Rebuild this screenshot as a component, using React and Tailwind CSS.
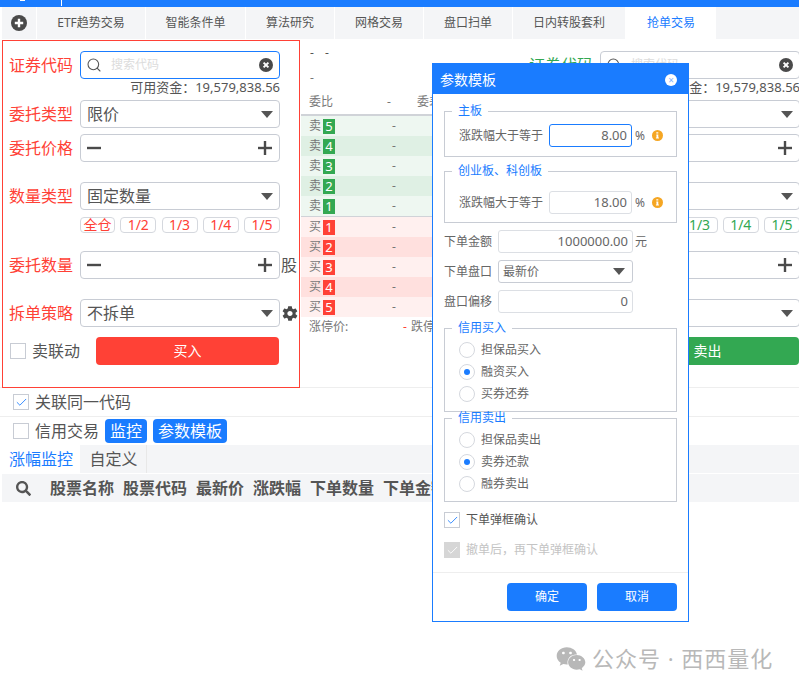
import { Search, Check, Minus, Plus } from 'lucide-react'
import { FaSearch, FaWeixin } from 'react-icons/fa'
import { IoMdSettings } from 'react-icons/io'

const FONT = 'font-["Noto_Sans","Noto_Sans_CJK_SC",sans-serif]'

const TABS = [
  { name: 'ETF趋势交易', w: 'w-[109px]' },
  { name: '智能条件单', w: 'w-[100px]' },
  { name: '算法研究', w: 'w-[89px]' },
  { name: '网格交易', w: 'w-[89px]' },
  { name: '盘口扫单', w: 'w-[89px]' },
  { name: '日内转股套利', w: 'w-[113px]' },
]

const SELL_ROWS = [5, 4, 3, 2, 1]
const BUY_ROWS = [1, 2, 3, 4, 5]
const RATIOS = ['1/2', '1/3', '1/4', '1/5']

function ClearIcon() {
  return (
    <svg width="14" height="14" viewBox="0 0 14 14" aria-hidden="true">
      <circle cx="7" cy="7" r="7" fill="#4a4a4a" />
      <path d="M4.6 4.6l4.8 4.8M9.4 4.6l-4.8 4.8" stroke="#fff" strokeWidth="2" />
    </svg>
  )
}

function Caret() {
  return <span className="w-0 h-0 border-x-[6px] border-x-transparent border-t-[7px] border-t-[#555]" aria-hidden="true" />
}

function InfoIcon() {
  return (
    <svg width="11" height="11" viewBox="0 0 11 11" aria-hidden="true">
      <circle cx="5.5" cy="5.5" r="5.5" fill="#f5a623" />
      <path d="M4.3 2.2h2v1.3h-2zM4.3 4.4h2v3.2h.6v1H3.9v-1h.6V5.4h-.2z" fill="#fff" />
    </svg>
  )
}

function Field({ label, color, children, className = '' }) {
  return (
    <div className={`flex items-center ${className}`}>
      <span className={`w-[71px] shrink-0 text-base leading-none ${color}`}>{label}</span>
      {children}
    </div>
  )
}

function SelectBox({ value }) {
  return (
    <div className="w-[200px] h-[28px] shrink-0 flex items-center justify-between pl-[6px] pr-[6px] bg-white border border-[#c8ccd4] rounded-[4px] text-base text-[#555]">
      {value}
      <Caret />
    </div>
  )
}

function Stepper() {
  return (
    <div className="w-[200px] h-[28px] shrink-0 flex items-center justify-between pl-px pr-[2px] bg-white border border-[#c8ccd4] rounded-[4px] text-[#4a4a4a]">
      <Minus size={24} strokeWidth={2.4} strokeLinecap="butt" />
      <Plus size={24} strokeWidth={2.4} strokeLinecap="butt" />
    </div>
  )
}

function TradePanel({ side }) {
  const buy = side === 'buy'
  const labelColor = buy ? 'text-[#ff4136]' : 'text-[#33a852]'
  const ratioClass = buy ? 'text-[#ff4136]' : 'text-[#33a852]'
  return (
    <div className={`w-[298px] h-[348px] shrink-0 pt-[10px] pl-[6px] ${buy ? 'border border-[#ff4136]' : 'border border-transparent'}`}>
      <Field label="证券代码" color={labelColor}>
        <div className={`w-[200px] h-[28px] shrink-0 flex items-center pl-[5px] pr-[6px] bg-white border rounded-[4px] ${buy ? 'border-[#1a7cff]' : 'border-[#c8ccd4]'}`}>
          <Search size={16} strokeWidth={1.6} className="text-[#555]" />
          <span className="ml-[9px] flex-1 text-xs text-[#dcdcdc]">搜索代码</span>
          <ClearIcon />
        </div>
      </Field>
      <div className="w-[271px] h-[21px] text-right text-[13px] leading-[17px] text-[#555] whitespace-nowrap">
        可用资金：19,579,838.56
      </div>
      <Field label="委托类型" color={labelColor}><SelectBox value="限价" /></Field>
      <Field label="委托价格" color={labelColor} className="mt-[6px]"><Stepper /></Field>
      <Field label="数量类型" color={labelColor} className="mt-[20px]"><SelectBox value="固定数量" /></Field>
      <div className="ml-[71px] mt-[7px] w-[200px] flex justify-between">
        <span className={`w-[35px] h-[16px] flex items-center justify-center bg-white border border-[#d5d8de] rounded-[4px] text-sm leading-none ${ratioClass}`}>全仓</span>
        {RATIOS.map((r) => (
          <span key={r} className={`w-[36px] h-[16px] flex items-center justify-center bg-white border border-[#d5d8de] rounded-[4px] text-sm leading-none ${ratioClass}`}>{r}</span>
        ))}
      </div>
      <Field label="委托数量" color={labelColor} className="mt-[18px]">
        <Stepper />
        <span className="ml-[1px] text-base text-[#555]">股</span>
      </Field>
      <Field label="拆单策略" color={labelColor} className="mt-[20px]">
        <SelectBox value="不拆单" />
        <IoMdSettings size={19} className="ml-[1px] text-[#4a4a4a]" />
      </Field>
      <div className="mt-[10px] flex items-center">
        <span className="ml-px w-[16px] h-[16px] border border-[#c8ccd4] bg-white" />
        <span className="ml-[6px] w-[64px] text-base leading-none text-[#555]">卖联动</span>
        <button className={`w-[183px] h-[28px] rounded-[4px] text-sm text-white ${buy ? 'bg-[#ff4136]' : 'bg-[#33a852]'}`}>{buy ? '买入' : '卖出'}</button>
      </div>
    </div>
  )
}

function QuoteRow({ label, level, i, buy }) {
  const bg = buy
    ? (i % 2 === 0 ? 'bg-[#fff0ef]' : 'bg-[#ffe0de]')
    : (i % 2 === 0 ? 'bg-[#eef7f1]' : 'bg-[#dff0e4]')
  return (
    <div className={`h-[20px] flex items-center pl-[8px] text-xs text-[#777] ${bg}`}>
      <span className="w-[12px]">{label}</span>
      <span className={`ml-[2px] w-[12px] h-[15px] flex items-center justify-center text-[13px] leading-none text-white ${buy ? 'bg-[#ff4136]' : 'bg-[#33a852]'}`}>{level}</span>
      <span className="ml-[57px]">-</span>
    </div>
  )
}

function OrderBook() {
  return (
    <div className="w-[221px] shrink-0 ml-[1px] text-xs text-[#777]">
      <div className="h-[24px] pt-[5px] pl-[9px] flex gap-[11px] text-[#555]"><span>-</span><span>-</span></div>
      <div className="h-[24px] pt-[6px] pl-[9px]">-</div>
      <div className="h-[28px] pt-px flex items-center pl-[8px] border-b-2 border-[#d0d3d8]">
        <span className="w-[78px]">委比</span>
        <span className="w-[30px]">-</span>
        <span>委差</span>
      </div>
      {SELL_ROWS.map((n, i) => <QuoteRow key={n} label="卖" level={n} i={i} />)}
      <div className="h-px bg-[#d0d3d8]" />
      {BUY_ROWS.map((n, i) => <QuoteRow key={n} label="买" level={n} i={i} buy />)}
      <div className="h-[19px] flex items-center pl-[8px]">
        <span className="w-[94px]">涨停价:</span>
        <span className="w-[8px] text-[#ff4136]">-</span>
        <span>跌停价:</span>
      </div>
    </div>
  )
}

function BlueCheck({ disabled }) {
  return (
    <span className={`w-[16px] h-[16px] shrink-0 flex items-center justify-center border ${disabled ? 'bg-[#d6d6d6] border-[#d6d6d6] text-white' : 'bg-white border-[#c8ccd4] text-[#1a7cff]'}`}>
      <Check size={13} strokeWidth={1.6} />
    </span>
  )
}

function Radio({ label, on }) {
  return (
    <div className="h-[22px] flex items-center pl-[14px]">
      <span className="w-[16px] h-[16px] flex items-center justify-center rounded-full border border-[#d5d8de] bg-white">
        {on && <span className="w-[6px] h-[6px] rounded-full bg-[#1a7cff]" />}
      </span>
      <span className="ml-[6px] text-xs text-[#666]">{label}</span>
    </div>
  )
}

function Group({ title, className = '', children }) {
  return (
    <fieldset className={`w-[233px] border border-[#c8ccd4] ${className}`}>
      <legend className="ml-[7px] px-[6px] text-xs leading-[14px] text-[#1a7cff]">{title}</legend>
      {children}
    </fieldset>
  )
}

function PercentRow({ value, focus }) {
  return (
    <div className="flex items-center pl-[14px] text-xs text-[#666]">
      <span className="w-[90px]">涨跌幅大于等于</span>
      <span className={`w-[83px] h-[23px] flex items-center justify-end pr-[4px] border rounded-[3px] text-[13px] ${focus ? 'border-[#1a7cff]' : 'border-[#dcdfe4]'}`}>{value}</span>
      <span className="ml-[3px] w-[17px]">%</span>
      <InfoIcon />
    </div>
  )
}

function AmountRow({ label, suffix, children }) {
  return (
    <div className="flex items-center text-xs text-[#666]">
      <span className="w-[54px]">{label}</span>
      {children}
      {suffix && <span className="ml-[2px]">{suffix}</span>}
    </div>
  )
}

function ParamsModal() {
  return (
    <div className="absolute left-[432px] top-[63px] w-[257px] h-[559px] bg-white border border-[#1a7cff] border-t-2">
      <div className="h-[29px] flex items-center justify-between pl-[7px] pr-[11px] bg-[#1a7cff] text-sm text-white">
        参数模板
        <span className="w-[12px] h-[12px] flex items-center justify-center rounded-full bg-white text-[10px] leading-none text-[#7fb2ff]">×</span>
      </div>
      <div className="pl-[11px] pt-[10px]">
        <Group title="主板" className="h-[53px]">
          <div className="mt-[6px]"><PercentRow value="8.00" focus /></div>
        </Group>
        <Group title="创业板、科创板" className="h-[59px] mt-[7px]">
          <div className="mt-[13px]"><PercentRow value="18.00" /></div>
        </Group>
        <div className="mt-[7px] flex flex-col gap-[7px]">
          <AmountRow label="下单金额" suffix="元">
            <span className="w-[135px] h-[23px] flex items-center justify-end pr-[4px] border border-[#dcdfe4] rounded-[3px] text-[13px]">1000000.00</span>
          </AmountRow>
          <AmountRow label="下单盘口">
            <span className="w-[135px] h-[23px] flex items-center justify-between pl-[4px] pr-[7px] border border-[#c8ccd4] rounded-[3px]">最新价<Caret /></span>
          </AmountRow>
          <AmountRow label="盘口偏移">
            <span className="w-[135px] h-[23px] flex items-center justify-end pr-[4px] border border-[#dcdfe4] rounded-[3px] text-[13px]">0</span>
          </AmountRow>
        </div>
        <Group title="信用买入" className="h-[91px] mt-[8px]">
          <div className="mt-[4px]">
            <Radio label="担保品买入" />
            <Radio label="融资买入" on />
            <Radio label="买券还券" />
          </div>
        </Group>
        <Group title="信用卖出" className="h-[91px] mt-[-1px]">
          <div className="mt-[4px]">
            <Radio label="担保品卖出" />
            <Radio label="卖券还款" on />
            <Radio label="融券卖出" />
          </div>
        </Group>
        <div className="mt-[10px] flex items-center gap-[6px] text-xs text-[#555]"><BlueCheck />下单弹框确认</div>
        <div className="mt-[14px] flex items-center gap-[6px] text-xs text-[#c4c4c4]"><BlueCheck disabled />撤单后，再下单弹框确认</div>
      </div>
      <div className="mt-[14px] h-px bg-[#eeeeee]" />
      <div className="mt-[10px] pr-[11px] flex justify-end gap-[10px]">
        <button className="w-[80px] h-[28px] rounded-[4px] bg-[#1a7cff] text-xs text-white">确定</button>
        <button className="w-[80px] h-[28px] rounded-[4px] bg-[#1a7cff] text-xs text-white">取消</button>
      </div>
    </div>
  )
}

export default function App() {
  return (
    <div className={`relative w-[799px] h-[691px] overflow-hidden bg-white ${FONT}`}>
      <div className="h-[7px] bg-[#1a7cff] relative">
        <span className="absolute left-[20px] top-0 w-[5px] h-px bg-white" />
        <span className="absolute left-[61px] top-0 w-px h-[6px] bg-white" />
      </div>

      {/* Tab strip */}
      <div className="h-[32px] ml-[2px] flex bg-[#f4f5f7] text-xs text-[#555]">
        <div className="w-[35px] pr-px flex items-center justify-center border-r border-white">
          <svg width="16" height="16" viewBox="0 0 16 16" aria-hidden="true">
            <circle cx="8" cy="8" r="8" fill="#4a4a4a" />
            <path d="M8 3.8v8.4M3.8 8h8.4" stroke="#fff" strokeWidth="2.4" />
          </svg>
        </div>
        {TABS.map((t) => (
          <div key={t.name} className={`${t.w} flex items-center justify-center border-r border-white`}>{t.name}</div>
        ))}
        <div className="w-[90px] flex items-center justify-center bg-white text-[#1a7cff]">抢单交易</div>
      </div>

      {/* Trading area */}
      <div className="h-[349px] pt-px pl-[2px] flex border-b border-[#eeeeee]">
        <TradePanel side="buy" />
        <OrderBook />
        <TradePanel side="sell" />
      </div>

      <div className="h-[29px] pl-[13px] flex items-center gap-[6px] border-b border-[#eeeeee] text-base text-[#555]">
        <BlueCheck />关联同一代码
      </div>
      <div className="h-[28px] pl-[13px] flex items-center text-base text-[#555]">
        <span className="w-[16px] h-[16px] border border-[#c8ccd4] bg-white" />
        <span className="ml-[6px] w-[70px]">信用交易</span>
        <span className="w-[42px] h-[24px] flex items-center justify-center rounded-[4px] bg-[#1a7cff] text-white">监控</span>
        <span className="ml-[6px] w-[74px] h-[24px] flex items-center justify-center rounded-[4px] bg-[#1a7cff] text-white">参数模板</span>
      </div>

      {/* Monitor table */}
      <div className="h-[28px] ml-[2px] flex bg-[#f4f5f7] text-base">
        <div className="w-[78px] mr-px flex items-center justify-center bg-white text-[#1a7cff]">涨幅监控</div>
        <div className="w-[66px] flex items-center justify-center border-r border-[#e8e8e8] text-[#555]">自定义</div>
      </div>
      <div className="h-[28px] ml-[2px] mt-px pl-[14px] flex items-center gap-[9px] bg-[#f4f5f7] text-base font-bold text-[#555] whitespace-nowrap">
        <FaSearch size={15} className="mr-[10px]" />
        <span>股票名称</span>
        <span>股票代码</span>
        <span>最新价</span>
        <span>涨跌幅</span>
        <span>下单数量</span>
        <span>下单金额</span>
      </div>

      <ParamsModal />

      {/* Watermark */}
      <div className="absolute left-[556px] top-[642px] flex items-center gap-[6px] text-[22px] tracking-[1px] text-[#b8b8b8] whitespace-nowrap">
        <FaWeixin size={30} />
        公众号 · 西西量化
      </div>
    </div>
  )
}
